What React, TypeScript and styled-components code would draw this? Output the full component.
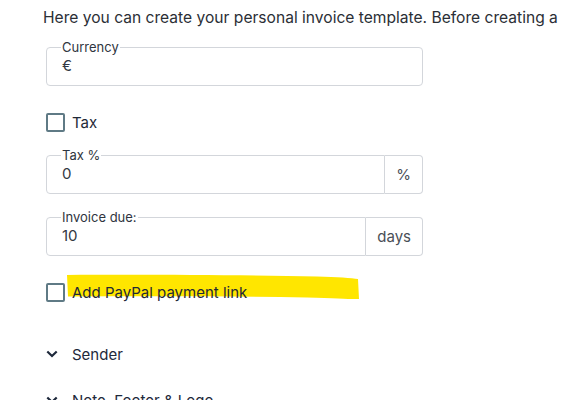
import React from "react";
import styled, { createGlobalStyle } from "styled-components";

const Global = createGlobalStyle`
  html, body { margin: 0; padding: 0; background: #fff; }
  body { font-family: Inter, "Noto Sans", sans-serif; color: #1f2937; overflow: hidden; }
  * { box-sizing: border-box; }
`;

const Page = styled.div`
  width: 561px;
  height: 400px;
  overflow: hidden;
  padding: 8px 0 0 43px;
`;

const Intro = styled.p`
  margin: 0;
  font-size: 15.6px;
  line-height: 20px;
  color: #2b2f36;
  white-space: nowrap;
`;

const Form = styled.div`
  display: flex;
  flex-direction: column;
  padding-left: 3px;
  width: 380px;
`;

const Group = styled.div<{ $mt: number }>`
  display: flex;
  align-items: flex-end;
  margin-top: ${(p) => p.$mt}px;
  width: 377px;
`;

const Field = styled.fieldset<{ $joined?: boolean }>`
  flex: 1;
  margin: 0;
  min-width: 0;
  border: 1px solid #d3d6db;
  border-radius: ${(p) => (p.$joined ? "4px 0 0 4px" : "4px")};
  padding: 0 15px 10px;
`;

const Legend = styled.legend`
  font-size: 13px;
  line-height: 14px;
  padding: 0 1px;
  margin-left: -1px;
  color: #2f3540;
`;

const Value = styled.div`
  margin-top: 3px;
  font-size: 15px;
  line-height: 18px;
  color: #333842;
`;

const Addon = styled.div`
  height: 39px;
  display: flex;
  align-items: center;
  padding: 0 11px;
  border: 1px solid #d3d6db;
  border-left: none;
  border-radius: 0 4px 4px 0;
  font-size: 15px;
  color: #4a4f57;
`;

const CheckRow = styled.label<{ $mt: number }>`
  position: relative;
  display: flex;
  align-items: center;
  gap: 7px;
  height: 20px;
  margin-top: ${(p) => p.$mt}px;
  font-size: 15px;
  color: #1f2937;
`;

const Box = styled.span`
  width: 19px;
  height: 19px;
  border: 2px solid #5f7a85;
  border-radius: 2px;
  flex: none;
`;

const CheckText = styled.span`
  position: relative;
  z-index: 1;
`;

const Highlight = styled.svg`
  position: absolute;
  left: 21px;
  top: -8px;
  z-index: 0;
`;

const Section = styled.div<{ $mt: number }>`
  display: flex;
  align-items: center;
  gap: 14px;
  height: 20px;
  margin-top: ${(p) => p.$mt}px;
  font-size: 15px;
  color: #1e293b;
`;

const Chevron = () => (
  <svg width="12" height="8" viewBox="0 0 12 8">
    <path d="M1.3 1.5 L6 6 L10.7 1.5" fill="none" stroke="#1e293b" strokeWidth="2.2" />
  </svg>
);

export default function App() {
  return (
    <>
      <Global />
      <Page>
        <Intro>Here you can create your personal invoice template. Before creating a</Intro>
        <Form>
          <Group $mt={12}>
            <Field>
              <Legend>Currency</Legend>
              <Value>€</Value>
            </Field>
          </Group>
          <CheckRow $mt={26}>
            <Box />
            <CheckText>Tax</CheckText>
          </CheckRow>
          <Group $mt={16}>
            <Field $joined>
              <Legend>Tax %</Legend>
              <Value>0</Value>
            </Field>
            <Addon>%</Addon>
          </Group>
          <Group $mt={16}>
            <Field $joined>
              <Legend>Invoice due:</Legend>
              <Value>10</Value>
            </Field>
            <Addon>days</Addon>
          </Group>
          <CheckRow $mt={26}>
            <Box />
            <Highlight width="294" height="27" viewBox="0 0 294 27">
              <path
                d="M0 1 C 70 0.5, 180 1, 250 2.5 C 270 3, 285 4, 291 5 L 292 25 C 285 25.5, 270 24, 240 23.5 C 160 22, 80 22, 1 22.5 Z"
                fill="#ffe600"
              />
            </Highlight>
            <CheckText>Add PayPal payment link</CheckText>
          </CheckRow>
          <Section $mt={42}>
            <Chevron />
            <span>Sender</span>
          </Section>
          <Section $mt={26}>
            <Chevron />
            <span>Note, Footer &amp; Logo</span>
          </Section>
        </Form>
      </Page>
    </>
  );
}
